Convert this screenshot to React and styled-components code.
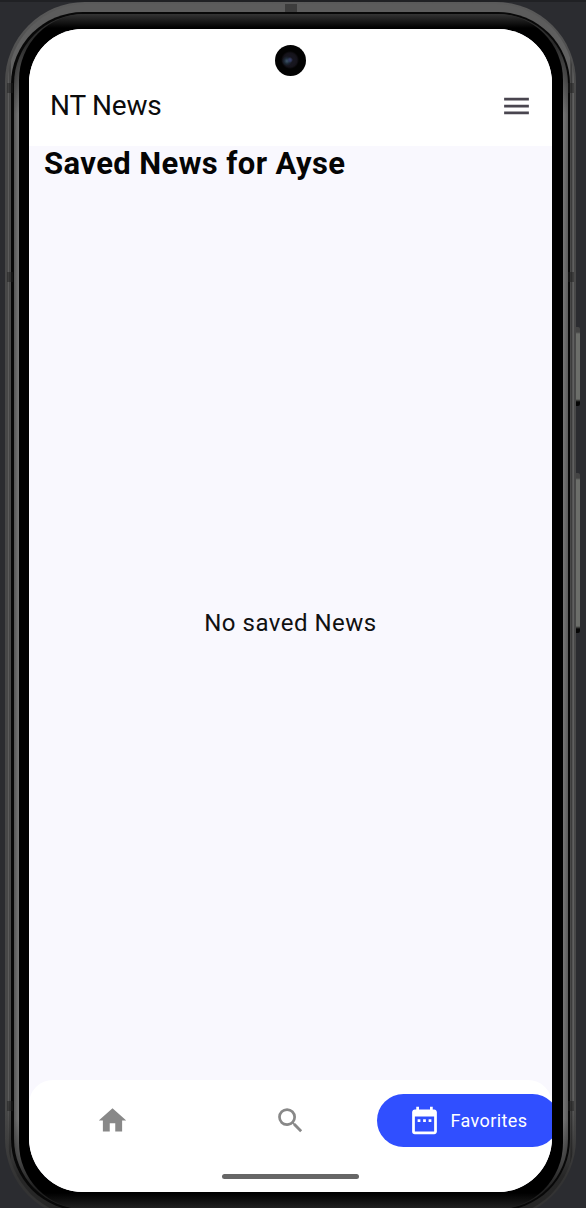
import React from 'react';
import styled, { createGlobalStyle } from 'styled-components';

const GlobalStyle = createGlobalStyle`
  * { box-sizing: border-box; }
  body { margin: 0; background: #2b2c30; }
`;

const Stage = styled.main`
  position: relative;
  width: 586px;
  height: 1208px;
  overflow: hidden;
  padding: 2px 10px 0 5px;
  background: linear-gradient(#202124 0 2px, #2b2c30 2px);
  font-family: Roboto, sans-serif;
`;

const Rim = styled.div`
  height: 1217px;
  padding: 2px 2px 2px 3px;
  border-radius: 80px;
  background: linear-gradient(#5a5a5a, #484848 90px, #484848 calc(100% - 110px), #333 calc(100% - 40px));
`;

const Band = styled.div`
  height: 100%;
  padding: 8px 4px 6px 3px;
  border-radius: 78px;
  background:
    linear-gradient(transparent calc(100% - 120px), rgba(20, 20, 20, 0.75) calc(100% - 40px)),
    linear-gradient(90deg, #5c5c5c 0 1px, #303030 2px, #626262 3px, #5c5c5c 30px, #5c5c5c calc(100% - 30px), #626262 calc(100% - 4px), #303030 calc(100% - 3px), #606060 calc(100% - 1px));
`;

const Groove = styled.div`
  height: 100%;
  padding: 2px 2px 2px 3px;
  border-radius: 72px;
  background: #080808;
`;

const InnerRim = styled.div`
  height: 100%;
  padding: 0 5px;
  border-radius: 70px;
  background:
    linear-gradient(#303030, rgba(34, 34, 34, 0.9) 30px, transparent 100px, transparent calc(100% - 90px), #202020 calc(100% - 20px)),
    linear-gradient(90deg, #555 0, #7a7a7a 5px, #777 calc(100% - 5px), #5c5c5c);
`;

const Bezel = styled.div`
  height: 100%;
  padding: 15px 10px 17px;
  border-radius: 66px;
  background: linear-gradient(#343434, #000 14px, #000 calc(100% - 16px), #222);
`;

const Screen = styled.div`
  position: relative;
  display: flex;
  flex-direction: column;
  width: 523px;
  height: 1163px;
  overflow: hidden;
  border-radius: 54px;
  background: #f9f8fe;
`;

const Header = styled.header`
  display: flex;
  align-items: center;
  justify-content: space-between;
  height: 117px;
  padding: 37px 19px 0 21px;
  background: #fff;
`;

const AppTitle = styled.div`
  font-size: 28px;
  line-height: 36px;
  letter-spacing: -0.2px;
  color: #0c0c0c;
`;

const Icon = styled.svg`
  display: block;
  flex: none;
  width: ${p => p.$size}px;
  height: ${p => p.$size}px;
  fill: ${p => p.$color};
`;

const SearchIcon = styled(Icon)`
  margin-left: 8px;
`;

const Content = styled.section`
  display: flex;
  flex: 1;
  flex-direction: column;
`;

const Heading = styled.h1`
  margin: 0;
  padding: 0 15px;
  font-size: 31px;
  line-height: 36px;
  font-weight: 700;
  letter-spacing: 0.4px;
  color: #050505;
`;

const EmptyState = styled.div`
  display: flex;
  flex: 1;
  align-items: center;
  justify-content: center;
  padding-bottom: 16px;
  font-size: 24px;
  letter-spacing: 0.5px;
  color: #111;
`;

const BottomBar = styled.footer`
  display: flex;
  flex-direction: column;
  align-items: center;
  height: 112px;
  border-radius: 24px 24px 0 0;
  background: #fff;
`;

const Tabs = styled.nav`
  display: flex;
  width: 100%;
  padding-top: 14px;
`;

const Tab = styled.div`
  display: flex;
  flex: none;
  align-items: center;
  justify-content: center;
  width: ${p => p.$width}px;
  height: 53px;
`;

const ActiveTab = styled(Tab)`
  justify-content: flex-start;
  gap: 10px;
  padding-left: 30.5px;
  border-radius: 27px;
  background: #304fff;
  color: #fff;
  font-size: 18px;
  letter-spacing: 0.4px;
`;

const HomeIndicator = styled.div`
  width: 137px;
  height: 5px;
  margin-top: 27px;
  border-radius: 3px;
  background: #666;
`;

const Camera = styled.div`
  position: absolute;
  top: 16px;
  left: 246px;
  width: 31px;
  height: 31px;
  border-radius: 50%;
  background:
    radial-gradient(circle at 15px 15px, #343c64 0 1px, transparent 3px),
    radial-gradient(circle at 12px 16px, #40566a 0, #1b2632 3px, transparent 5px),
    radial-gradient(circle at 15px 15px, #17161f 0 5px, #15131a 7px, #030303 9px);
`;

const SideKey = styled.div`
  position: absolute;
  left: 576px;
  top: ${p => p.$top}px;
  width: 4px;
  height: ${p => p.$height}px;
  border-radius: 0 2px 2px 0;
  background: linear-gradient(#444 0 5px, #6c6e6a 7px calc(100% - 7px), #050505 calc(100% - 4px));
`;

const AntennaLine = styled.div`
  position: absolute;
  left: ${p => p.$left}px;
  top: ${p => p.$top}px;
  width: ${p => p.$width}px;
  height: ${p => p.$height}px;
  background: rgba(30, 30, 30, 0.5);
`;

const sideLines = [83, 272, 1101];

export default function App() {
  return (
    <>
      <GlobalStyle />
      <Stage>
        <Rim><Band><Groove><InnerRim><Bezel>
          <Screen>
            <Header>
              <AppTitle>NT News</AppTitle>
              <Icon $size={33} $color="#49454f" viewBox="0 0.3 24 24">
                <path d="M3 18h18v-2H3v2zm0-5h18v-2H3v2zm0-7v2h18V6H3z" />
              </Icon>
            </Header>
            <Content>
              <Heading>Saved News for Ayse</Heading>
              <EmptyState>No saved News</EmptyState>
            </Content>
            <BottomBar>
              <Tabs>
                <Tab $width={167}>
                  <Icon $size={33} $color="#888" viewBox="0 0 24 24">
                    <path d="M10 20v-6h4v6h5v-8h3L12 3 2 12h3v8z" />
                  </Icon>
                </Tab>
                <Tab $width={181}>
                  <SearchIcon $size={33} $color="#888" viewBox="0 0 24 24">
                    <path d="M15.5 14h-.79l-.28-.27A6.47 6.47 0 0 0 16 9.5 6.5 6.5 0 1 0 9.5 16c1.61 0 3.09-.59 4.23-1.57l.27.28v.79l5 4.99L20.49 19l-4.99-5zm-6 0C7.01 14 5 11.99 5 9.5S7.01 5 9.5 5 14 7.01 14 9.5 11.99 14 9.5 14z" />
                  </SearchIcon>
                </Tab>
                <ActiveTab $width={182}>
                  <Icon $size={33} $color="#fff" viewBox="0 0 24 24">
                    <path d="M9 11H7v2h2v-2zm4 0h-2v2h2v-2zm4 0h-2v2h2v-2zm2-7h-1V2h-2v2H8V2H6v2H5c-1.11 0-1.99.9-1.99 2L3 20a2 2 0 0 0 2 2h14c1.1 0 2-.9 2-2V6c0-1.1-.9-2-2-2zm0 16H5V9h14v11z" />
                  </Icon>
                  <span>Favorites</span>
                </ActiveTab>
              </Tabs>
              <HomeIndicator />
            </BottomBar>
            <Camera />
          </Screen>
        </Bezel></InnerRim></Groove></Band></Rim>
        <SideKey $top={327} $height={79} />
        <SideKey $top={473} $height={160} />
        <AntennaLine $left={285} $top={4} $width={12} $height={8} />
        {sideLines.map(top => (
          <React.Fragment key={top}>
            <AntennaLine $left={7} $top={top} $width={6} $height={10} />
            <AntennaLine $left={568} $top={top} $width={6} $height={10} />
          </React.Fragment>
        ))}
      </Stage>
    </>
  );
}
